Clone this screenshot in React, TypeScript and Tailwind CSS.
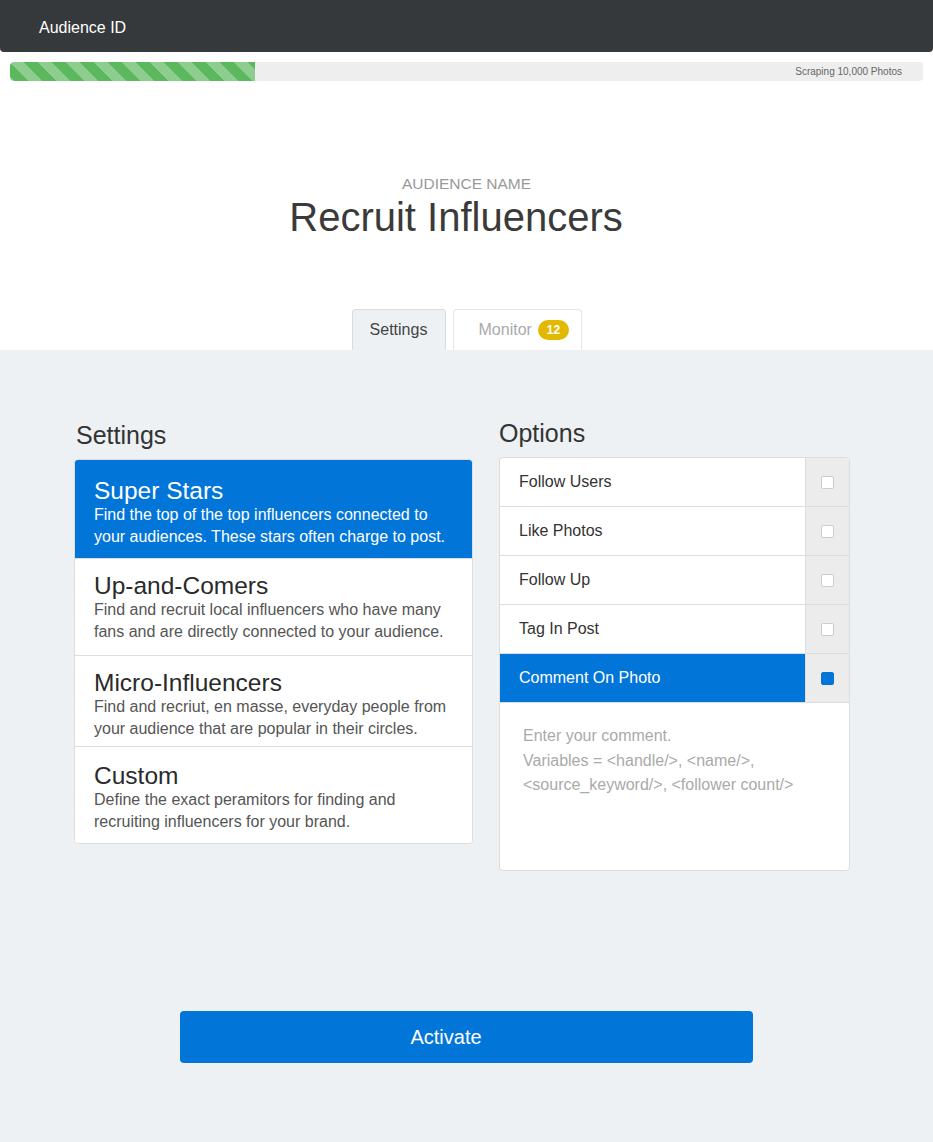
import React, { useState } from 'react';

const PRESETS = [
  {
    id: 'super',
    title: 'Super Stars',
    desc: 'Find the top of the top influencers connected to your audiences. These stars often charge to post.',
    pad: 'pt-[18px] pb-[10px]',
  },
  {
    id: 'up',
    title: 'Up-and-Comers',
    desc: 'Find and recruit local influencers who have many fans and are directly connected to your audience.',
    pad: 'pt-[14px] pb-[12px]',
  },
  {
    id: 'micro',
    title: 'Micro-Influencers',
    desc: 'Find and recriut, en masse, everyday people from your audience that are popular in their circles.',
    pad: 'pt-[14px] pb-[6px]',
  },
  {
    id: 'custom',
    title: 'Custom',
    desc: 'Define the exact peramitors for finding and recruiting influencers for your brand.',
    pad: 'pt-[16px] pb-[10px]',
  },
];

const OPTIONS = ['Follow Users', 'Like Photos', 'Follow Up', 'Tag In Post', 'Comment On Photo'];

const App: React.FC = () => {
  const [preset, setPreset] = useState('super');
  const [checked, setChecked] = useState<string[]>(['Comment On Photo']);

  const toggle = (name: string) => {
    setChecked(c => (c.includes(name) ? c.filter(n => n !== name) : [...c, name]));
  };

  return (
    <div className="min-h-[1142px] flex flex-col bg-white font-['Liberation_Sans',Arial,sans-serif] text-[#333]">
      {/* top bar */}
      <div className="h-[52px] bg-[#36393c] rounded-b-[4px] flex items-center pl-[39px] pt-[3px] text-white text-[16px]">
        Audience ID
      </div>

      {/* progress */}
      <div className="mx-[10px] mt-[10px] h-[19px] rounded-[4px] bg-[#eeeeee] flex items-center overflow-hidden">
        <div className="h-full w-[245px] rounded-l-[4px] bg-[#5cb85c] bg-[linear-gradient(45deg,rgba(255,255,255,.3)_25%,transparent_25%,transparent_50%,rgba(255,255,255,.3)_50%,rgba(255,255,255,.3)_75%,transparent_75%,transparent)] bg-[length:28px_28px]" />
        <span className="ml-auto mr-[21px] text-[10px] text-[#666]">Scraping 10,000 Photos</span>
      </div>

      {/* title */}
      <div className="flex flex-col items-center pt-[94px]">
        <div className="text-[15.5px] text-[#999] uppercase leading-[18px]">Audience Name</div>
        <h1 className="text-[40px] font-light leading-[48px] text-[#3a3a3a] mr-[21px]">Recruit Influencers</h1>
      </div>

      {/* tabs */}
      <div className="flex justify-center gap-[7px] pt-[68px]">
        <button className="w-[94px] h-[41px] bg-[#edf1f4] border border-b-0 border-[#d9dcdf] rounded-t-[4px] text-[16px] text-[#444]">
          Settings
        </button>
        <button className="w-[129px] h-[41px] bg-white border border-b-0 border-[#e6e6e6] rounded-t-[4px] text-[16px] text-[#aaa] flex items-center pl-[25px] gap-[6px]">
          Monitor
          <span className="h-[20px] px-[9px] rounded-full bg-[#e2b900] text-white text-[12px] font-bold flex items-center">12</span>
        </button>
      </div>

      {/* body */}
      <div className="flex-1 bg-[#edf1f4] pt-[70px] pb-[80px]">
        <div className="flex pl-[74px] gap-[26px]">
          {/* settings */}
          <div className="w-[399px]">
            <h2 className="text-[25px] leading-[30px] text-[#333] ml-[2px] mb-[9px]">Settings</h2>
            <div className="bg-white border border-[#ddd] rounded-[4px] overflow-hidden">
              {PRESETS.map((p, i) => {
                const active = preset === p.id;
                return (
                  <div
                    key={p.id}
                    onClick={() => setPreset(p.id)}
                    className={`cursor-pointer px-[19px] ${p.pad} ${i > 0 ? 'border-t border-[#ddd]' : ''} ${active ? 'bg-[#0275d8] text-white' : 'bg-white'}`}
                  >
                    <div className={`text-[24.5px] leading-[26px] ${active ? 'text-white' : 'text-[#2a2a2a]'}`}>{p.title}</div>
                    <div className={`text-[16px] leading-[22px] ${active ? 'text-white' : 'text-[#555]'}`}>{p.desc}</div>
                  </div>
                );
              })}
            </div>
          </div>

          {/* options */}
          <div className="w-[351px]">
            <h2 className="text-[25px] leading-[30px] text-[#333] mb-[9px] -mt-[2px]">Options</h2>
            <div className="bg-white border border-[#ddd] rounded-[4px] overflow-hidden">
              {OPTIONS.map(o => {
                const on = checked.includes(o);
                return (
                  <div key={o} onClick={() => toggle(o)} className="flex h-[49px] border-b border-[#ddd] cursor-pointer">
                    <div className={`flex-1 flex items-center pl-[19px] text-[16px] ${on ? 'bg-[#0275d8] text-white' : 'text-[#333]'}`}>
                      {o}
                    </div>
                    <div className="w-[44px] bg-[#ececec] border-l border-[#ddd] flex items-center justify-center">
                      <span className={`w-[13px] h-[13px] rounded-[2px] border ${on ? 'bg-[#0275d8] border-[#0275d8]' : 'bg-white border-[#ccc]'}`} />
                    </div>
                  </div>
                );
              })}
              <textarea
                className="block w-full h-[167px] resize-none outline-none px-[23px] pt-[21px] text-[16px] leading-[24.5px] text-[#333] placeholder:text-[#aaa]"
                placeholder={'Enter your comment.\nVariables = <handle/>, <name/>, <source_keyword/>, <follower count/>'}
              />
            </div>
          </div>
        </div>

        <div className="flex justify-center mt-[140px]">
          <button className="w-[573px] h-[52px] ml-[-1px] pr-[40px] rounded-[4px] bg-[#0275d8] text-white text-[20px]">Activate</button>
        </div>
      </div>
    </div>
  );
};

export default App;
